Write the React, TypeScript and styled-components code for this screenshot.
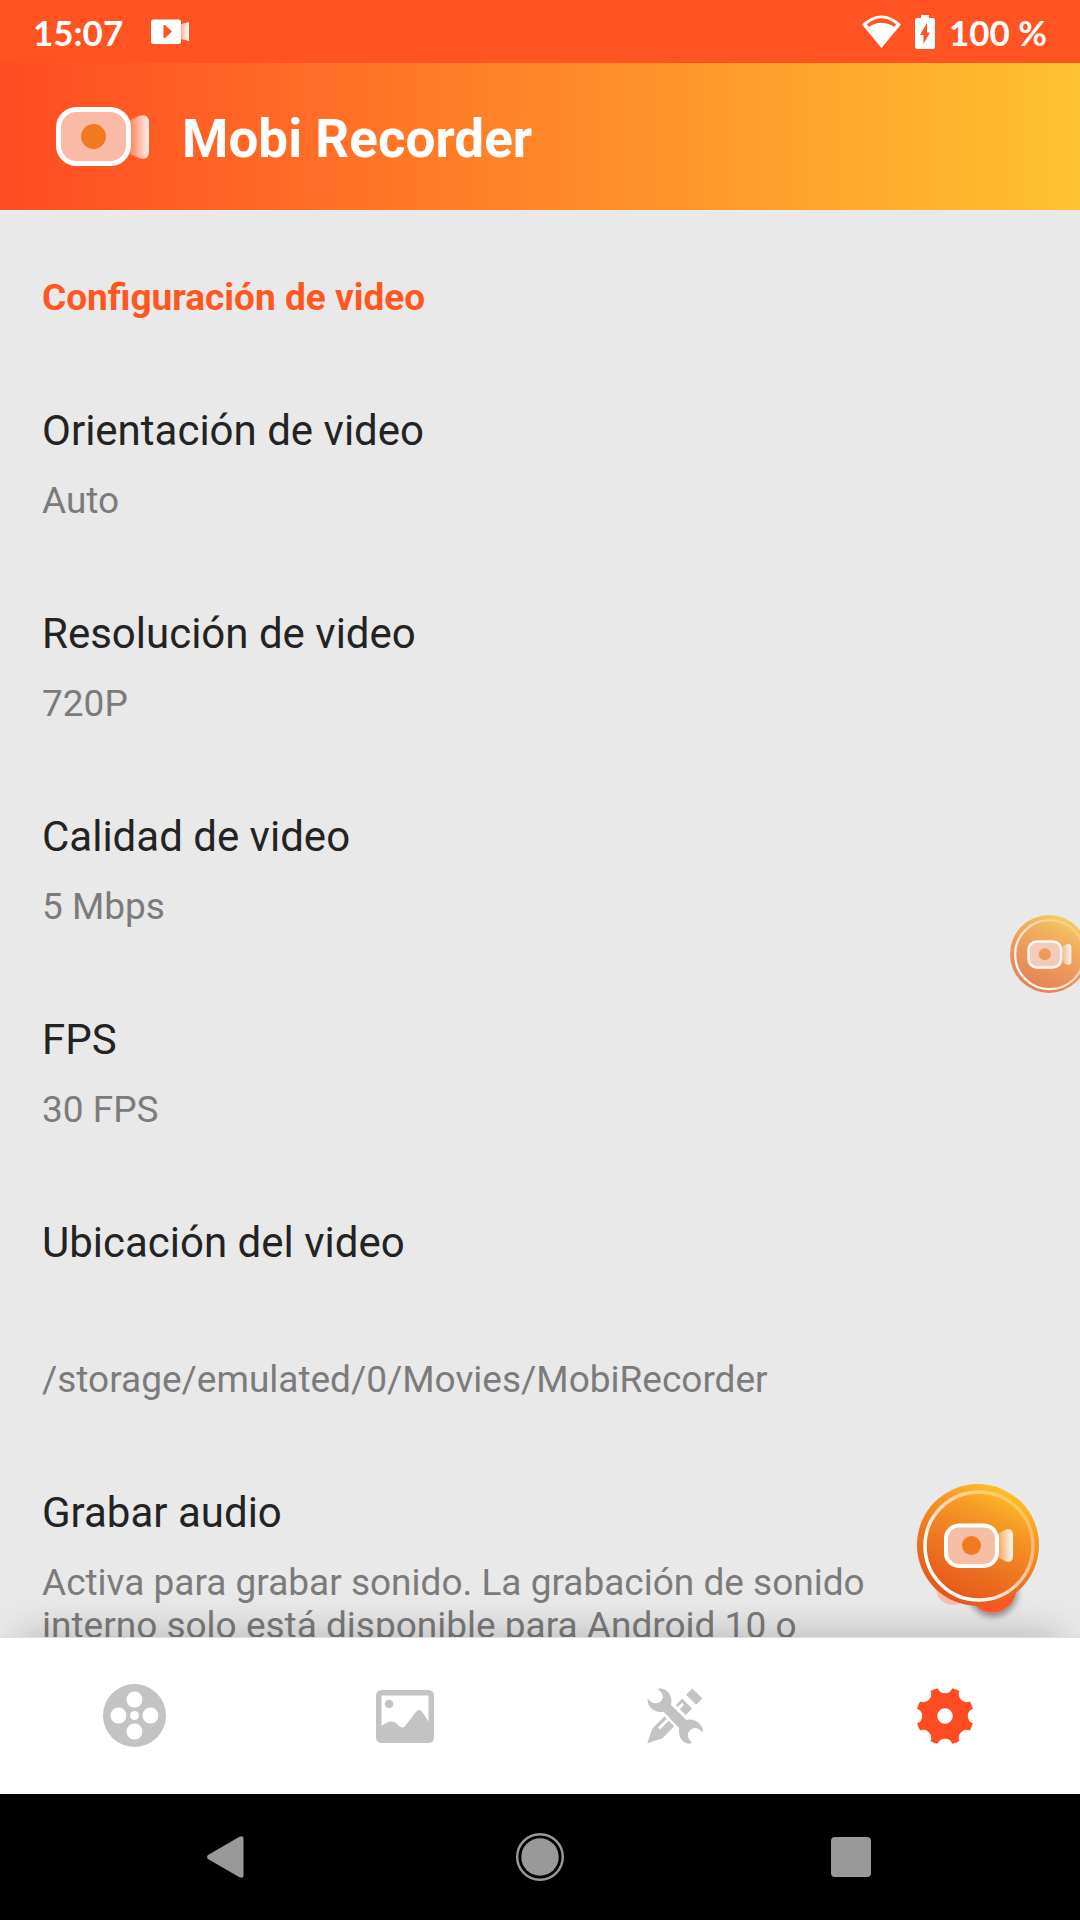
import React, { useId } from 'react';
import styled, { createGlobalStyle } from 'styled-components';

const GlobalStyle = createGlobalStyle`
  * { box-sizing: border-box; }
  body { margin: 0; background: #000; }
  button { border: 0; padding: 0; background: none; font: inherit; color: inherit; cursor: pointer; }
  svg { display: block; flex: none; }
`;

const Screen = styled.div`
  position: relative;
  display: flex;
  flex-direction: column;
  height: 100vh;
  overflow: hidden;
  background: #e9e9e9;
  font-family: Roboto, "Liberation Sans", sans-serif;
`;

const StatusBar = styled.div`
  display: flex;
  flex: none;
  align-items: center;
  justify-content: space-between;
  height: 63px;
  padding: 0 33px;
  background: #ff5321;
  color: #fff;
  font: 700 35px/44px Lato, "Open Sans", sans-serif;
`;

const StatusGroup = styled.div<{ $gap: number }>`
  display: flex;
  align-items: center;
  gap: ${(p) => p.$gap}px;
`;

const AppBar = styled.header`
  display: flex;
  flex: none;
  align-items: center;
  gap: 32px;
  height: 147px;
  padding: 0 56px;
  background: linear-gradient(90deg, #ff4b22, #ffc230);
  color: #fff;
`;

const AppTitle = styled.h1`
  margin: 0;
  padding-top: 4px;
  font-size: 53px;
  font-weight: 700;
  line-height: 60px;
`;

const Settings = styled.main`
  flex: 1;
  min-height: 0;
  overflow: hidden;
`;

const SectionTitle = styled.h2`
  margin: 0;
  padding: 66px 42px 44px;
  color: #ff5722;
  font-size: 37px;
  font-weight: 700;
  line-height: 43px;
`;

const Row = styled.button<{ $gap?: number }>`
  display: flex;
  flex-direction: column;
  gap: ${(p) => p.$gap ?? 24}px;
  width: 100%;
  padding: 43px 200px 44px 42px;
  text-align: left;
`;

const RowTitle = styled.span`
  color: #232323;
  font-size: 42px;
  line-height: 49px;
`;

const RowSummary = styled.span`
  color: #7b7b7b;
  font-size: 37px;
  line-height: 43px;
`;

const TabBar = styled.nav`
  position: relative;
  display: grid;
  flex: none;
  grid-template-columns: repeat(4, 1fr);
  height: 157px;
  border-top: 1px solid #e0e0e0;
  background: #fff;
  box-shadow: 0 -20px 40px -20px rgba(0, 0, 0, 0.25);
`;

const Tab = styled.button<{ $active?: boolean }>`
  display: flex;
  align-items: center;
  justify-content: center;
  color: ${(p) => (p.$active ? '#ff4b22' : '#c3c3c3')};
`;

const SystemNav = styled.nav`
  display: grid;
  flex: none;
  grid-template-columns: repeat(3, 1fr);
  height: 126px;
  padding: 0 73px;
  background: #000;
  color: #999;
`;

const SystemButton = styled.button`
  display: flex;
  align-items: center;
  justify-content: center;
`;

const RecordButton = styled.button`
  position: absolute;
  right: 41px;
  bottom: 314px;
`;

const EdgeBubble = styled.button`
  position: absolute;
  top: 915px;
  right: -8px;
  opacity: 0.7;
`;

function Camera() {
  const id = useId();
  return (
    <svg width="94" height="60" viewBox="0 0 94 60" aria-hidden="true">
      <defs>
        <linearGradient id={id}>
          <stop offset="0" stopColor="#fff" stopOpacity=".25" />
          <stop offset="1" stopColor="#fff" stopOpacity=".92" />
        </linearGradient>
      </defs>
      <path d="M74 13 L83 9 Q93 6 93 16 V44 Q93 54 83 51 L74 47Z" fill={`url(#${id})`} />
      <rect x="2.5" y="2.5" width="70" height="54" rx="18" fill="#f9bba7" stroke="#fff" strokeWidth="5" />
      <circle cx="37.5" cy="29.5" r="12.5" fill="#f07a22" />
    </svg>
  );
}

function Bubble({ size, shadow }: { size: number; shadow?: boolean }) {
  const id = useId();
  return (
    <svg width={size} height={size} viewBox="0 0 122 122" overflow="visible" aria-hidden="true">
      <defs>
        <linearGradient id={`${id}f`} x1=".82" y1=".05" x2=".36" y2="1">
          <stop offset="0" stopColor="#fcc827" />
          <stop offset=".26" stopColor="#f69c27" />
          <stop offset=".55" stopColor="#ef7c22" />
          <stop offset="1" stopColor="#e5541b" />
        </linearGradient>
        <linearGradient id={`${id}r`} x1=".85" y1=".15" x2=".2" y2=".75">
          <stop offset="0" stopColor="#fff" stopOpacity=".25" />
          <stop offset="1" stopColor="#fff" />
        </linearGradient>
        <linearGradient id={`${id}l`}>
          <stop offset="0" stopColor="#fff" stopOpacity=".3" />
          <stop offset="1" stopColor="#fff" stopOpacity=".95" />
        </linearGradient>
        <filter id={`${id}s`} x="-50%" y="-50%" width="200%" height="200%">
          <feDropShadow dx="1" dy="4" stdDeviation="3" floodOpacity=".4" />
        </filter>
      </defs>
      {shadow && (
        <>
          <circle cx="36" cy="104" r="17" fill="#f8bcae" />
          <circle cx="75" cy="104" r="24.5" fill="#fb5726" filter={`url(#${id}s)`} />
        </>
      )}
      <circle cx="61" cy="61" r="61" fill={`url(#${id}f)`} />
      <circle cx="62" cy="62" r="54" fill="none" stroke={`url(#${id}r)`} strokeWidth="3.5" />
      <path d="M82 49 L89 45.5 Q96 44 96 51 V72 Q96 79 89 77.5 L82 74Z" fill={`url(#${id}l)`} />
      <rect x="29" y="41.5" width="51" height="40.5" rx="13" fill="#f6bfa5" stroke="#fff" strokeWidth="4" />
      <circle cx="54.5" cy="61.5" r="9.5" fill="#f07a22" />
    </svg>
  );
}

function RecordingIcon() {
  const id = useId();
  return (
    <svg width="38" height="26" viewBox="0 0 38 26" aria-hidden="true">
      <defs>
        <linearGradient id={id}>
          <stop offset="0" stopColor="#fff" stopOpacity=".55" />
          <stop offset="1" stopColor="#fff" />
        </linearGradient>
      </defs>
      <path d="M30 5 L38 3 V22 L30 20Z" fill={`url(#${id})`} />
      <rect y="0.5" width="30" height="24.5" rx="2.5" fill="#fff" />
      <path d="M12.5 6 H14 L21 12.5 L14 19 H12.5Z" fill="#ff5321" />
    </svg>
  );
}

const WifiIcon = () => (
  <svg width="39" height="34" viewBox="0 0 39 34" aria-hidden="true">
    <path
      d="M0 9.5 Q19.5 -8.5 39 9.5 L19.5 33Z M4.8 9.5 L7 11.800 Q19.5 3.5 32 11.8 L34.2 9.5 Q19.5 -3 4.8 9.5Z"
      fill="#fff"
      fillRule="evenodd"
    />
  </svg>
);

const BatteryIcon = () => (
  <svg width="20" height="34" viewBox="0 0 20 34" aria-hidden="true">
    <path
      d="M6 0 H14 V3 H18 Q20 3 20 5 V32 Q20 34 18 34 H2 Q0 34 0 32 V5 Q0 3 2 3 H6Z M12 8 L5 20 H8.5 V29 L15 17.5 H12Z"
      fill="#fff"
      fillRule="evenodd"
    />
  </svg>
);

const ReelIcon = () => (
  <svg width="64" height="64" viewBox="-31.5 -31.5 64 64" aria-hidden="true">
    <circle r="31.5" fill="currentColor" />
    <g fill="#fff">
      <circle r="4.5" />
      <circle cx="-16" r="8" />
      <circle cx="16" r="8" />
      <circle cy="-16" r="8" />
      <circle cy="16" r="8" />
    </g>
  </svg>
);

const PictureIcon = () => (
  <svg width="58" height="53" viewBox="0 0 58 53" aria-hidden="true">
    <path
      d="M6 0 H52 Q58 0 58 6 V47 Q58 53 52 53 H6 Q0 53 0 47 V6 Q0 0 6 0Z M5.5 5.5 V36 C12 31 17 30 21 34 C25 38 27 39 30 35 L39 23 Q43.5 17 47 23 L52.5 31.5 V5.5Z"
      fill="currentColor"
      fillRule="evenodd"
    />
    <circle cx="13" cy="14" r="4.3" fill="currentColor" />
  </svg>
);

const ToolsIcon = () => (
  <svg width="56" height="56" viewBox="0 0 169 168" fill="currentColor" aria-hidden="true">
    <path d="M34 2 C50 -4 74 12 74 38 L72 50 L119 96 C145 90 167 108 169 130 L167 133 C155 118 140 116 130 127 C119 138 122 152 136 164 C133 168 128 168 122 167 C104 163 94 146 97 120 L50 71 C25 76 4 60 1 36 L3 33 C14 47 32 50 42 39 C52 29 48 14 34 4Z" />
    <path d="M137 1 L167 31 L148 50 L118 20Z" />
    <path d="M106 31 L136 61 L117 81 L99 63 L112 50 L106 44 L93 57 L87 51Z" />
    <path d="M53 85 L60 92 L33 119 L39 125 L66 98 L82 115 L47 151 L1 166 L16 122Z" />
  </svg>
);

function gearOutline(radius: number, bite: number, halfAngle: number) {
  const point = (deg: number) => {
    const a = (deg * Math.PI) / 180;
    return `${(radius * Math.cos(a)).toFixed(2)} ${(radius * Math.sin(a)).toFixed(2)}`;
  };
  let d = `M${point(-halfAngle)}`;
  for (let k = 0; k < 8; k += 1) {
    d += ` A${bite} ${bite} 0 0 0 ${point(k * 45 + halfAngle)}`;
    d += ` A${radius} ${radius} 0 0 1 ${point((k + 1) * 45 - halfAngle)}`;
  }
  return `${d}Z M7.8 0 A7.8 7.8 0 1 0 -7.8 0 A7.8 7.8 0 1 0 7.8 0Z`;
}

const GearIcon = () => (
  <svg width="58" height="58" viewBox="-29 -29 58 58" aria-hidden="true">
    <path d={gearOutline(28.8, 7.9, 14.8)} fill="currentColor" fillRule="evenodd" />
  </svg>
);

const BackIcon = () => (
  <svg width="44" height="44" viewBox="0 0 44 44" aria-hidden="true">
    <path d="M1 20 L32 2 Q36 0 36.5 3 V41 Q36 44 32 42 L1 24 Q-1 22 1 20Z" fill="currentColor" />
  </svg>
);

const HomeIcon = () => (
  <svg width="48" height="48" viewBox="0 0 48 48" aria-hidden="true">
    <circle cx="24" cy="24" r="22.8" fill="none" stroke="currentColor" strokeWidth="2.4" />
    <circle cx="24" cy="24" r="18.7" fill="currentColor" />
  </svg>
);

const RecentsIcon = () => (
  <svg width="40" height="40" viewBox="0 0 40 40" aria-hidden="true">
    <rect width="40" height="40" rx="4" fill="currentColor" />
  </svg>
);

const settings = [
  { title: 'Orientación de video', summary: 'Auto' },
  { title: 'Resolución de video', summary: '720P' },
  { title: 'Calidad de video', summary: '5 Mbps' },
  { title: 'FPS', summary: '30 FPS' },
  { title: 'Ubicación del video', summary: '/storage/emulated/0/Movies/MobiRecorder', gap: 91 },
  {
    title: 'Grabar audio',
    summary: 'Activa para grabar sonido. La grabación de sonido interno solo está disponible para Android 10 o',
  },
];

export default function App() {
  return (
    <Screen>
      <GlobalStyle />
      <StatusBar>
        <StatusGroup $gap={28}>
          <span>15:07</span>
          <RecordingIcon />
        </StatusGroup>
        <StatusGroup $gap={14}>
          <WifiIcon />
          <BatteryIcon />
          <span>100 %</span>
        </StatusGroup>
      </StatusBar>
      <AppBar>
        <Camera />
        <AppTitle>Mobi Recorder</AppTitle>
      </AppBar>
      <Settings>
        <SectionTitle>Configuración de video</SectionTitle>
        {settings.map((item) => (
          <Row key={item.title} $gap={item.gap}>
            <RowTitle>{item.title}</RowTitle>
            <RowSummary>{item.summary}</RowSummary>
          </Row>
        ))}
      </Settings>
      <TabBar>
        <Tab aria-label="Videos"><ReelIcon /></Tab>
        <Tab aria-label="Imágenes"><PictureIcon /></Tab>
        <Tab aria-label="Herramientas"><ToolsIcon /></Tab>
        <Tab aria-label="Configuración" $active><GearIcon /></Tab>
      </TabBar>
      <SystemNav>
        <SystemButton aria-label="Atrás"><BackIcon /></SystemButton>
        <SystemButton aria-label="Inicio"><HomeIcon /></SystemButton>
        <SystemButton aria-label="Recientes"><RecentsIcon /></SystemButton>
      </SystemNav>
      <EdgeBubble aria-label="Abrir controles"><Bubble size={78} /></EdgeBubble>
      <RecordButton aria-label="Grabar"><Bubble size={122} shadow /></RecordButton>
    </Screen>
  );
}
